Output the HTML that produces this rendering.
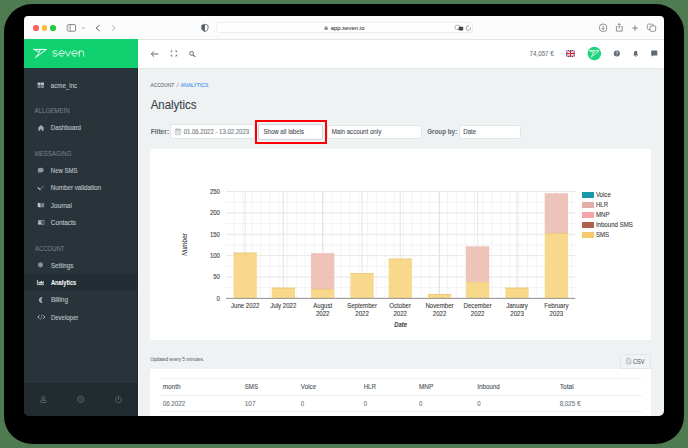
<!DOCTYPE html>
<html><head><meta charset="utf-8">
<style>
*{margin:0;padding:0;box-sizing:border-box}
html,body{width:688px;height:448px;overflow:hidden}
body{background:#4e7b51;position:relative;font-family:"Liberation Sans",sans-serif}
.a{position:absolute}
svg text{white-space:pre}
</style></head><body>
<div class="a" style="left:3.80px;top:3.90px;width:680.50px;height:440.30px;background:#000;border-radius:28px"></div>
<div class="a" style="left:24.00px;top:16.00px;width:640.00px;height:23.50px;background:#fcfcfc;border-radius:4px 4px 0 0"></div>
<div class="a" style="left:138.00px;top:39.10px;width:526.00px;height:0.70px;background:#e4e4e4"></div>
<div class="a" style="left:33.05px;top:25.05px;width:5.70px;height:5.70px;background:#fe5f57;border-radius:50%"></div>
<div class="a" style="left:41.65px;top:25.05px;width:5.70px;height:5.70px;background:#febc2e;border-radius:50%"></div>
<div class="a" style="left:50.35px;top:25.05px;width:5.70px;height:5.70px;background:#28c840;border-radius:50%"></div>
<div class="a" style="left:215.50px;top:22.40px;width:257.60px;height:11.00px;background:#fefefe;border:0.7px solid #ededed;border-radius:3.5px"></div>
<div class="a" style="left:24.00px;top:39.00px;width:114.00px;height:377.00px;background:#28343a;border-radius:0 0 0 5px"></div>
<div class="a" style="left:24.00px;top:39.00px;width:114.00px;height:28.90px;background:#10d070"></div>
<div class="a" style="left:24.00px;top:382.70px;width:114.00px;height:33.30px;background:#212b30;border-radius:0 0 0 5px"></div>
<div class="a" style="left:24.00px;top:273.70px;width:114.00px;height:17.20px;background:#232e34"></div>
<svg class="a" style="left:0;top:0" width="688" height="448"><path d="M57.2,51.7 Q56.5,50.75 55,50.75 Q52.8,50.75 52.8,52.2 Q52.8,53.4 55,53.5 Q57.4,53.6 57.4,54.85 Q57.4,56.25 55,56.25 Q53.2,56.25 52.4,55.3 M59,53.5 L64.4,53.5 A2.7,2.75 0 1 0 63.5,55.5 M65.3,50.75 L67.95,56.3 L70.6,50.75 M71.9,53.5 L77.3,53.5 A2.7,2.75 0 1 0 76.4,55.5 M79.2,50.45 L79.2,56.6 M79.2,53.3 Q79.2,50.75 81.45,50.75 Q83.7,50.75 83.7,53.3 L83.7,56.6" fill="none" stroke="#f4fff8" stroke-width="0.9"/></svg>
<div class="a" style="left:138.00px;top:39.80px;width:526.00px;height:376.20px;background:#eff2f3;border-radius:0 0 5px 0"></div>
<div class="a" style="left:138.00px;top:39.80px;width:526.00px;height:28.10px;background:#fff;box-shadow:0 0.6px 1.2px rgba(0,0,0,.06)"></div>
<div class="a" style="left:137.00px;top:67.90px;width:1.00px;height:348.00px;background:#1f292e"></div>
<div class="a" style="left:138.00px;top:67.50px;width:1.00px;height:348.50px;background:#f7f9f9"></div>
<div class="a" style="left:170.20px;top:124.10px;width:84.60px;height:15.30px;background:#fff;border:0.6px solid #e0e4e7;border-radius:2px"></div>
<div class="a" style="left:258.30px;top:124.00px;width:64.30px;height:16.00px;background:#fff;border:0.8px solid #c9d9e8;border-radius:2px"></div>
<div class="a" style="left:326.50px;top:124.80px;width:95.90px;height:14.50px;background:#fff;border:0.6px solid #e2e6e9;border-radius:2px"></div>
<div class="a" style="left:458.60px;top:125.00px;width:62.10px;height:14.20px;background:#fff;border:0.6px solid #e2e6e9;border-radius:2px"></div>
<div class="a" style="left:254.60px;top:120.00px;width:72.20px;height:23.80px;border:2.3px solid #f00"></div>
<div class="a" style="left:150.40px;top:149.30px;width:500.40px;height:191.00px;background:#fff"></div>
<div class="a" style="left:620.30px;top:353.50px;width:30.30px;height:15.20px;border:0.6px solid #e3e7e9;border-radius:2px;background:#f0f3f4"></div>
<div class="a" style="left:150.40px;top:368.70px;width:500.40px;height:47.30px;background:#fff"></div>
<div class="a" style="left:159.70px;top:377.60px;width:482.00px;height:0.80px;background:#eef0f2"></div>
<div class="a" style="left:159.70px;top:394.50px;width:482.00px;height:0.80px;background:#eef0f2"></div>
<div class="a" style="left:159.70px;top:411.40px;width:482.00px;height:0.80px;background:#eef0f2"></div>
<svg class="a" style="left:0;top:0" width="688" height="448" viewBox="0 0 688 448"><line x1="226" x2="575.3" y1="298.40" y2="298.40" stroke="#e0e0e0" stroke-width="0.8"/><line x1="226" x2="575.3" y1="287.72" y2="287.72" stroke="#eeeeee" stroke-width="0.8"/><line x1="226" x2="575.3" y1="277.04" y2="277.04" stroke="#e0e0e0" stroke-width="0.8"/><line x1="226" x2="575.3" y1="266.36" y2="266.36" stroke="#eeeeee" stroke-width="0.8"/><line x1="226" x2="575.3" y1="255.68" y2="255.68" stroke="#e0e0e0" stroke-width="0.8"/><line x1="226" x2="575.3" y1="245.00" y2="245.00" stroke="#eeeeee" stroke-width="0.8"/><line x1="226" x2="575.3" y1="234.32" y2="234.32" stroke="#e0e0e0" stroke-width="0.8"/><line x1="226" x2="575.3" y1="223.64" y2="223.64" stroke="#eeeeee" stroke-width="0.8"/><line x1="226" x2="575.3" y1="212.96" y2="212.96" stroke="#e0e0e0" stroke-width="0.8"/><line x1="226" x2="575.3" y1="202.28" y2="202.28" stroke="#eeeeee" stroke-width="0.8"/><line x1="226" x2="575.3" y1="191.60" y2="191.60" stroke="#e0e0e0" stroke-width="0.8"/><line x1="234.09" x2="234.09" y1="191.60" y2="298.4" stroke="#f0f0f0" stroke-width="0.8"/><line x1="242.98" x2="242.98" y1="191.60" y2="298.4" stroke="#f0f0f0" stroke-width="0.8"/><line x1="251.87" x2="251.87" y1="191.60" y2="298.4" stroke="#f0f0f0" stroke-width="0.8"/><line x1="260.76" x2="260.76" y1="191.60" y2="298.4" stroke="#f0f0f0" stroke-width="0.8"/><line x1="269.65" x2="269.65" y1="191.60" y2="298.4" stroke="#f0f0f0" stroke-width="0.8"/><line x1="278.54" x2="278.54" y1="191.60" y2="298.4" stroke="#f0f0f0" stroke-width="0.8"/><line x1="287.43" x2="287.43" y1="191.60" y2="298.4" stroke="#f0f0f0" stroke-width="0.8"/><line x1="296.33" x2="296.33" y1="191.60" y2="298.4" stroke="#f0f0f0" stroke-width="0.8"/><line x1="305.22" x2="305.22" y1="191.60" y2="298.4" stroke="#f0f0f0" stroke-width="0.8"/><line x1="314.11" x2="314.11" y1="191.60" y2="298.4" stroke="#f0f0f0" stroke-width="0.8"/><line x1="323.00" x2="323.00" y1="191.60" y2="298.4" stroke="#f0f0f0" stroke-width="0.8"/><line x1="331.89" x2="331.89" y1="191.60" y2="298.4" stroke="#f0f0f0" stroke-width="0.8"/><line x1="340.78" x2="340.78" y1="191.60" y2="298.4" stroke="#f0f0f0" stroke-width="0.8"/><line x1="349.67" x2="349.67" y1="191.60" y2="298.4" stroke="#f0f0f0" stroke-width="0.8"/><line x1="358.57" x2="358.57" y1="191.60" y2="298.4" stroke="#f0f0f0" stroke-width="0.8"/><line x1="367.46" x2="367.46" y1="191.60" y2="298.4" stroke="#f0f0f0" stroke-width="0.8"/><line x1="376.35" x2="376.35" y1="191.60" y2="298.4" stroke="#f0f0f0" stroke-width="0.8"/><line x1="385.24" x2="385.24" y1="191.60" y2="298.4" stroke="#f0f0f0" stroke-width="0.8"/><line x1="394.13" x2="394.13" y1="191.60" y2="298.4" stroke="#f0f0f0" stroke-width="0.8"/><line x1="403.02" x2="403.02" y1="191.60" y2="298.4" stroke="#f0f0f0" stroke-width="0.8"/><line x1="411.91" x2="411.91" y1="191.60" y2="298.4" stroke="#f0f0f0" stroke-width="0.8"/><line x1="420.81" x2="420.81" y1="191.60" y2="298.4" stroke="#f0f0f0" stroke-width="0.8"/><line x1="429.70" x2="429.70" y1="191.60" y2="298.4" stroke="#f0f0f0" stroke-width="0.8"/><line x1="438.59" x2="438.59" y1="191.60" y2="298.4" stroke="#f0f0f0" stroke-width="0.8"/><line x1="447.48" x2="447.48" y1="191.60" y2="298.4" stroke="#f0f0f0" stroke-width="0.8"/><line x1="456.37" x2="456.37" y1="191.60" y2="298.4" stroke="#f0f0f0" stroke-width="0.8"/><line x1="465.26" x2="465.26" y1="191.60" y2="298.4" stroke="#f0f0f0" stroke-width="0.8"/><line x1="474.15" x2="474.15" y1="191.60" y2="298.4" stroke="#f0f0f0" stroke-width="0.8"/><line x1="483.04" x2="483.04" y1="191.60" y2="298.4" stroke="#f0f0f0" stroke-width="0.8"/><line x1="491.94" x2="491.94" y1="191.60" y2="298.4" stroke="#f0f0f0" stroke-width="0.8"/><line x1="500.83" x2="500.83" y1="191.60" y2="298.4" stroke="#f0f0f0" stroke-width="0.8"/><line x1="509.72" x2="509.72" y1="191.60" y2="298.4" stroke="#f0f0f0" stroke-width="0.8"/><line x1="518.61" x2="518.61" y1="191.60" y2="298.4" stroke="#f0f0f0" stroke-width="0.8"/><line x1="527.50" x2="527.50" y1="191.60" y2="298.4" stroke="#f0f0f0" stroke-width="0.8"/><line x1="536.39" x2="536.39" y1="191.60" y2="298.4" stroke="#f0f0f0" stroke-width="0.8"/><line x1="545.28" x2="545.28" y1="191.60" y2="298.4" stroke="#f0f0f0" stroke-width="0.8"/><line x1="554.18" x2="554.18" y1="191.60" y2="298.4" stroke="#f0f0f0" stroke-width="0.8"/><line x1="563.07" x2="563.07" y1="191.60" y2="298.4" stroke="#f0f0f0" stroke-width="0.8"/><line x1="571.96" x2="571.96" y1="191.60" y2="298.4" stroke="#f0f0f0" stroke-width="0.8"/><line x1="245.20" x2="245.20" y1="191.60" y2="298.4" stroke="#dedede" stroke-width="0.8"/><line x1="283.31" x2="283.31" y1="191.60" y2="298.4" stroke="#dedede" stroke-width="0.8"/><line x1="322.68" x2="322.68" y1="191.60" y2="298.4" stroke="#dedede" stroke-width="0.8"/><line x1="362.06" x2="362.06" y1="191.60" y2="298.4" stroke="#dedede" stroke-width="0.8"/><line x1="400.16" x2="400.16" y1="191.60" y2="298.4" stroke="#dedede" stroke-width="0.8"/><line x1="439.54" x2="439.54" y1="191.60" y2="298.4" stroke="#dedede" stroke-width="0.8"/><line x1="477.65" x2="477.65" y1="191.60" y2="298.4" stroke="#dedede" stroke-width="0.8"/><line x1="517.02" x2="517.02" y1="191.60" y2="298.4" stroke="#dedede" stroke-width="0.8"/><line x1="556.40" x2="556.40" y1="191.60" y2="298.4" stroke="#dedede" stroke-width="0.8"/><rect x="233.55" y="252.69" width="23.3" height="45.71" fill="rgb(247,214,130)" fill-opacity="0.92"/><line x1="233.55" x2="256.85" y1="252.99" y2="252.99" stroke="rgba(200,160,60,0.5)" stroke-width="0.6"/><rect x="271.66" y="287.72" width="23.3" height="10.68" fill="rgb(247,214,130)" fill-opacity="0.92"/><line x1="271.66" x2="294.96" y1="288.02" y2="288.02" stroke="rgba(200,160,60,0.5)" stroke-width="0.6"/><rect x="311.03" y="289.00" width="23.3" height="9.40" fill="rgb(247,214,130)" fill-opacity="0.92"/><line x1="311.03" x2="334.33" y1="289.30" y2="289.30" stroke="rgba(200,160,60,0.5)" stroke-width="0.6"/><rect x="311.03" y="253.12" width="23.3" height="35.88" fill="rgb(235,190,180)" fill-opacity="0.92"/><rect x="350.41" y="273.20" width="23.3" height="25.20" fill="rgb(247,214,130)" fill-opacity="0.92"/><line x1="350.41" x2="373.71" y1="273.50" y2="273.50" stroke="rgba(200,160,60,0.5)" stroke-width="0.6"/><rect x="388.51" y="258.67" width="23.3" height="39.73" fill="rgb(247,214,130)" fill-opacity="0.92"/><line x1="388.51" x2="411.81" y1="258.97" y2="258.97" stroke="rgba(200,160,60,0.5)" stroke-width="0.6"/><rect x="427.89" y="294.13" width="23.3" height="4.27" fill="rgb(247,214,130)" fill-opacity="0.92"/><line x1="427.89" x2="451.19" y1="294.43" y2="294.43" stroke="rgba(200,160,60,0.5)" stroke-width="0.6"/><rect x="466.00" y="281.74" width="23.3" height="16.66" fill="rgb(247,214,130)" fill-opacity="0.92"/><line x1="466.00" x2="489.30" y1="282.04" y2="282.04" stroke="rgba(200,160,60,0.5)" stroke-width="0.6"/><rect x="466.00" y="246.28" width="23.3" height="35.46" fill="rgb(235,190,180)" fill-opacity="0.92"/><rect x="505.37" y="287.72" width="23.3" height="10.68" fill="rgb(247,214,130)" fill-opacity="0.92"/><line x1="505.37" x2="528.67" y1="288.02" y2="288.02" stroke="rgba(200,160,60,0.5)" stroke-width="0.6"/><rect x="544.75" y="233.04" width="23.3" height="65.36" fill="rgb(247,214,130)" fill-opacity="0.92"/><line x1="544.75" x2="568.05" y1="233.34" y2="233.34" stroke="rgba(200,160,60,0.5)" stroke-width="0.6"/><rect x="544.75" y="193.31" width="23.3" height="39.73" fill="rgb(235,190,180)" fill-opacity="0.92"/><line x1="226" x2="575.3" y1="298.4" y2="298.4" stroke="#8a8a8a" stroke-width="0.9"/></svg>
<div class="a" style="left:581.70px;top:191.50px;width:12.20px;height:6.00px;background:#1a9aa8"></div>
<div class="a" style="left:581.70px;top:201.50px;width:12.20px;height:6.00px;background:#e2afa7"></div>
<div class="a" style="left:581.70px;top:211.50px;width:12.20px;height:6.00px;background:#f6a4ac"></div>
<div class="a" style="left:581.70px;top:221.50px;width:12.20px;height:6.00px;background:#b1604f"></div>
<div class="a" style="left:581.70px;top:231.50px;width:12.20px;height:6.00px;background:#f5ca6c"></div>
<svg class="a" style="left:0;top:0" width="688" height="448" viewBox="0 0 688 448"><rect x="67.2" y="24.6" width="8.4" height="6.6" rx="1.3" fill="none" stroke="#777" stroke-width="0.9"/><line x1="70.4" x2="70.4" y1="24.6" y2="31.2" stroke="#777" stroke-width="0.8"/><rect x="67.6" y="25" width="2.8" height="5.8" fill="#ddd"/><line x1="79.7" x2="79.7" y1="24" y2="32" stroke="#eee" stroke-width="0.5"/><polyline points="82.3,27.3 83.6,28.7 84.9,27.3" fill="none" stroke="#888" stroke-width="0.7"/><polyline points="99.6,25.2 96.1,28.1 99.6,31" fill="none" stroke="#555" stroke-width="0.95"/><polyline points="111.9,25.2 115.2,28.1 111.9,31" fill="none" stroke="#b5b5b5" stroke-width="0.95"/><path d="M204.9,24.2 L208,25.3 L208,28.6 Q208,30.6 204.9,31.6 Q201.8,30.6 201.8,28.6 L201.8,25.3 Z" fill="none" stroke="#555d63" stroke-width="0.8"/><path d="M204.9,24.2 L201.8,25.3 L201.8,28.6 Q201.8,30.6 204.9,31.6 Z" fill="#555d63"/><rect x="324.5" y="27.6" width="3.2" height="2.1" fill="#777"/><path d="M325.1,27.7 L325.1,26.9 Q326.1,25.6 327.1,26.9 L327.1,27.7" fill="none" stroke="#777" stroke-width="0.6"/><rect x="455.3" y="25.3" width="4.6" height="4.2" rx="1" fill="none" stroke="#999" stroke-width="0.7"/><rect x="458.6" y="26.8" width="4.6" height="3.8" rx="1" fill="#444"/><path d="M470.3,27.3 A2.2,2.2 0 1 1 468.3,26" fill="none" stroke="#888" stroke-width="0.7"/><polyline points="467.9,25.1 468.8,26 467.9,26.9" fill="none" stroke="#888" stroke-width="0.6"/><circle cx="603.1" cy="27.75" r="3.8" fill="none" stroke="#777" stroke-width="0.8"/><line x1="603.1" x2="603.1" y1="25.8" y2="29.4" stroke="#777" stroke-width="0.8"/><polyline points="601.7,28.1 603.1,29.5 604.5,28.1" fill="none" stroke="#777" stroke-width="0.8"/><path d="M617.8,26.6 L616.4,26.6 L616.4,31.1 L622.2,31.1 L622.2,26.6 L620.8,26.6" fill="none" stroke="#777" stroke-width="0.8"/><line x1="619.3" x2="619.3" y1="23.6" y2="28.6" stroke="#777" stroke-width="0.8"/><polyline points="617.9,25 619.3,23.6 620.7,25" fill="none" stroke="#777" stroke-width="0.8"/><line x1="632.2" x2="637.9" y1="28.1" y2="28.1" stroke="#777" stroke-width="0.9"/><line x1="635.05" x2="635.05" y1="25.3" y2="31" stroke="#777" stroke-width="0.9"/><rect x="647.4" y="24.1" width="5.8" height="5.4" rx="1.3" fill="#fff" stroke="#888" stroke-width="0.8"/><rect x="649.9" y="25.9" width="5.8" height="5.4" rx="1.3" fill="#fff" stroke="#777" stroke-width="0.8"/><line x1="151.3" x2="158.3" y1="54" y2="54" stroke="#5f6a75" stroke-width="1"/><polyline points="154,51.3 151.3,54 154,56.7" fill="none" stroke="#5f6a75" stroke-width="1"/><polyline points="171.2,52.199999999999996 171.2,50.9 172.5,50.9" fill="none" stroke="#5f6a75" stroke-width="0.9"/><polyline points="176.6,52.199999999999996 176.6,50.9 175.29999999999998,50.9" fill="none" stroke="#5f6a75" stroke-width="0.9"/><polyline points="171.2,54.7 171.2,56 172.5,56" fill="none" stroke="#5f6a75" stroke-width="0.9"/><polyline points="176.6,54.7 176.6,56 175.29999999999998,56" fill="none" stroke="#5f6a75" stroke-width="0.9"/><circle cx="191.6" cy="53.4" r="1.9" fill="none" stroke="#5f6a75" stroke-width="1"/><line x1="193" x2="195.3" y1="54.8" y2="56.9" stroke="#5f6a75" stroke-width="1.1"/><rect x="566" y="50.1" width="8.9" height="6.9" fill="#2a3a8a"/><path d="M566,50.1 L574.9,57 M574.9,50.1 L566,57" stroke="#fff" stroke-width="1.4"/><path d="M566,50.1 L574.9,57 M574.9,50.1 L566,57" stroke="#d33" stroke-width="0.5"/><path d="M570.45,50.1 V57 M566,53.55 H574.9" stroke="#fff" stroke-width="2"/><path d="M570.45,50.1 V57 M566,53.55 H574.9" stroke="#e22" stroke-width="1.1"/><circle cx="594.35" cy="53.45" r="6.75" fill="#1ed47c"/><path d="M589.8,50.7 L599.0,50.7 L591.0,57.3 M589.8,50.7 L593.0,52.4 M594.4,50.9 L593.0,53.8 L591.6,56.2" fill="none" stroke="#effcf5" stroke-width="0.85" stroke-linejoin="round" stroke-linecap="round"/><circle cx="616.85" cy="53.55" r="3.05" fill="#5f6a75"/><path d="M615.9,52.8 Q616,51.8 616.9,51.8 Q617.9,51.9 617.8,52.8 Q617.7,53.4 616.9,53.8 L616.9,54.4" fill="none" stroke="#fff" stroke-width="0.6"/><circle cx="616.9" cy="55.3" r="0.35" fill="#fff"/><path d="M633,55.6 L633.9,54.7 L633.9,53 Q634,50.9 635.65,50.8 Q637.3,50.9 637.4,53 L637.4,54.7 L638.3,55.6 Z" fill="#5f6a75"/><circle cx="635.65" cy="56.1" r="0.7" fill="#5f6a75"/><path d="M651.6,50.6 L656.9,50.6 Q657.3,50.6 657.3,51 L657.3,55.2 Q657.3,55.6 656.9,55.6 L653.2,55.6 L652.1,56.7 L652.1,55.6 L651.6,55.6 Q651.2,55.6 651.2,55.2 L651.2,51 Q651.2,50.6 651.6,50.6 Z" fill="#5f6a75"/><path d="M34,49.4 L46.4,49.4 L35.6,57.5 M34,49.4 L38.3,51.7 M40.3,49.7 L38.4,53.6 L36.4,56.6" fill="none" stroke="#fff" stroke-width="1.0" stroke-linejoin="round" stroke-linecap="round"/><rect x="37.6" y="82.5" width="3" height="2.6" fill="#b9c1c5"/><rect x="41" y="82.5" width="3" height="2.6" fill="#b9c1c5"/><rect x="37.6" y="85.4" width="3" height="2.6" fill="#7d888e"/><rect x="41" y="85.4" width="3" height="2.6" fill="#7d888e"/><path d="M37.6,128.3 L41,125.1 L44.4,128.3 L43.5,128.3 L43.5,130.7 L41.8,130.7 L41.8,129.2 L40.2,129.2 L40.2,130.7 L38.5,130.7 L38.5,128.3 Z" fill="#a4adb2"/><ellipse cx="40.7" cy="170.1" rx="2.9" ry="2.3" fill="#8f999e"/><path d="M38.4,171.2 L37.7,172.9 L40.2,172.1 Z" fill="#8f999e"/><path d="M38.1,187.6 L40,189.5" fill="none" stroke="#b3bbbf" stroke-width="1.2" stroke-linecap="round"/><path d="M40,189.5 L43.4,186" fill="none" stroke="#7f898f" stroke-width="1" stroke-linecap="round"/><path d="M37.7,202.8 L40.6,203.3 L40.6,207.6 L37.7,207.1 Z" fill="#bcc4c8"/><path d="M41.3,203.3 L44.1,202.8 L44.1,207.1 L41.3,207.6 Z" fill="#7d878d"/><rect x="37.9" y="220.2" width="6.5" height="4.5" fill="#8d979c"/><rect x="41.7" y="221" width="2" height="2.9" fill="#364148"/><circle cx="39.6" cy="221.6" r="0.8" fill="#c5cbce"/><rect x="38.5" y="222.9" width="2.4" height="1.2" fill="#c5cbce"/><path d="M40.5,261.9 L43,263.4 L43,266.3 L40.5,267.8 L38,266.3 L38,263.4 Z" fill="#7f8a90"/><circle cx="40.5" cy="264.85" r="0.9" fill="#9aa3a8"/><path d="M37.4,279.9 L37.4,284.6 L44,284.6" fill="none" stroke="#e6eaec" stroke-width="0.8"/><path d="M38.6,283.6 L38.6,281.2 L40,282.6 L41.3,280.8 L42.7,282.4 L43.6,280.3 L43.6,283.6 Z" fill="#e6eaec"/><path d="M42.8,297.0 A3.1,3.0 0 1 0 42.8,302.8 A2.2,3.1 0 0 1 42.8,297.0 Z" fill="#a9b2b7"/><polyline points="39.5,315.4 37.9,317.1 39.5,318.8" fill="none" stroke="#b4bcc0" stroke-width="1"/><polyline points="43.2,315.4 44.8,317.1 43.2,318.8" fill="none" stroke="#b4bcc0" stroke-width="1"/><line x1="42.1" x2="40.6" y1="314.4" y2="319.8" stroke="#7f898f" stroke-width="0.8"/><circle cx="43.2" cy="397.8" r="1.6" fill="none" stroke="#5f6a70" stroke-width="0.85"/><rect x="40.4" y="400.3" width="5.9" height="2.3" rx="1.15" fill="none" stroke="#5f6a70" stroke-width="0.85"/><path d="M80.8,396.1 L83.75,397.75 L83.75,401.05 L80.8,402.7 L77.85,401.05 L77.85,397.75 Z" fill="none" stroke="#5f6a70" stroke-width="0.9" stroke-linejoin="round"/><circle cx="80.8" cy="399.4" r="1.0" fill="none" stroke="#5f6a70" stroke-width="0.7"/><path d="M116.9,397.2 A3.0,3.0 0 1 0 120.1,397.2" fill="none" stroke="#5f6a70" stroke-width="0.9" stroke-linecap="round"/><line x1="118.5" x2="118.5" y1="396.2" y2="399.5" stroke="#5f6a70" stroke-width="0.9" stroke-linecap="round"/><rect x="175.2" y="129" width="5.6" height="6" rx="0.8" fill="#dfe3e6" stroke="#c3c9cd" stroke-width="0.6"/><rect x="175.2" y="129" width="5.6" height="1.6" fill="#b8bfc4"/><rect x="176.5" y="128.4" width="0.7" height="1.2" fill="#a9b0b5"/><rect x="178.8" y="128.4" width="0.7" height="1.2" fill="#a9b0b5"/><path d="M626.7,358.2 L629.4,358.2 L630.9,359.7 L630.9,363.8 L626.7,363.8 Z" fill="#dde2e5" stroke="#a3abb1" stroke-width="0.7"/></svg>
<svg class="a" style="left:0;top:0" width="688" height="448" viewBox="0 0 688 448" font-family="Liberation Sans, sans-serif"><text x="330.75" y="29.60" font-size="5.60" fill="#4a4a4a" textLength="33.70" lengthAdjust="spacingAndGlyphs"  stroke="#4a4a4a" stroke-width="0.1">app.seven.io</text><text x="50.75" y="88.10" font-size="6.70" fill="#bbc1c5" textLength="26.40" lengthAdjust="spacingAndGlyphs"  stroke="#bbc1c5" stroke-width="0.12">acme_inc</text><text x="34.55" y="113.10" font-size="6.70" fill="#7a848a" textLength="35.10" lengthAdjust="spacingAndGlyphs" >ALLGEMEIN</text><text x="50.75" y="130.40" font-size="6.70" fill="#bbc1c5" textLength="30.20" lengthAdjust="spacingAndGlyphs"  stroke="#bbc1c5" stroke-width="0.12">Dashboard</text><text x="34.75" y="156.10" font-size="6.70" fill="#7a848a" textLength="36.70" lengthAdjust="spacingAndGlyphs" >MESSAGING</text><text x="50.85" y="172.90" font-size="6.70" fill="#bbc1c5" textLength="26.70" lengthAdjust="spacingAndGlyphs"  stroke="#bbc1c5" stroke-width="0.12">New SMS</text><text x="50.85" y="190.20" font-size="6.70" fill="#bbc1c5" textLength="50.20" lengthAdjust="spacingAndGlyphs"  stroke="#bbc1c5" stroke-width="0.12">Number validation</text><text x="50.85" y="207.60" font-size="6.70" fill="#bbc1c5" textLength="21.00" lengthAdjust="spacingAndGlyphs"  stroke="#bbc1c5" stroke-width="0.12">Journal</text><text x="50.85" y="224.90" font-size="6.70" fill="#bbc1c5" textLength="25.10" lengthAdjust="spacingAndGlyphs"  stroke="#bbc1c5" stroke-width="0.12">Contacts</text><text x="34.95" y="250.60" font-size="6.70" fill="#7a848a" textLength="29.50" lengthAdjust="spacingAndGlyphs" >ACCOUNT</text><text x="50.95" y="267.70" font-size="6.70" fill="#bbc1c5" textLength="22.40" lengthAdjust="spacingAndGlyphs"  stroke="#bbc1c5" stroke-width="0.12">Settings</text><text x="50.95" y="285.00" font-size="6.70" fill="#ffffff" font-weight="bold" textLength="25.30" lengthAdjust="spacingAndGlyphs" >Analytics</text><text x="50.95" y="302.40" font-size="6.70" fill="#bbc1c5" textLength="17.00" lengthAdjust="spacingAndGlyphs"  stroke="#bbc1c5" stroke-width="0.12">Billing</text><text x="50.95" y="319.70" font-size="6.70" fill="#bbc1c5" textLength="27.30" lengthAdjust="spacingAndGlyphs"  stroke="#bbc1c5" stroke-width="0.12">Developer</text><text x="529.55" y="56.10" font-size="6.60" fill="#6c757d" textLength="24.20" lengthAdjust="spacingAndGlyphs"  stroke="#6c757d" stroke-width="0.1">74,057 €</text><text x="150.55" y="86.80" font-size="6.00" fill="#646d74" textLength="23.50" lengthAdjust="spacingAndGlyphs" stroke="#646d74" stroke-width="0.1">ACCOUNT</text><text x="176.15" y="86.80" font-size="6.00" fill="#b8bec3" textLength="2.80" lengthAdjust="spacingAndGlyphs"  stroke="#b8bec3" stroke-width="0.1">/</text><text x="180.75" y="86.80" font-size="6.00" fill="#3a8ef0" textLength="27.50" lengthAdjust="spacingAndGlyphs" stroke="#3a8ef0" stroke-width="0.1">ANALYTICS</text><text x="150.65" y="108.50" font-size="12.06" fill="#3a4249" textLength="45.90" lengthAdjust="spacingAndGlyphs"  stroke="#3a4249" stroke-width="0.1">Analytics</text><text x="150.65" y="134.10" font-size="7.00" fill="#5f6870" font-weight="bold" textLength="18.50" lengthAdjust="spacingAndGlyphs" >Filter:</text><text x="183.65" y="134.10" font-size="6.70" fill="#737c83" textLength="65.50" lengthAdjust="spacingAndGlyphs"  stroke="#737c83" stroke-width="0.1">01.06.2022 - 13.02.2023</text><text x="263.45" y="134.10" font-size="6.70" fill="#495057" textLength="40.60" lengthAdjust="spacingAndGlyphs"  stroke="#495057" stroke-width="0.1">Show all labels</text><text x="331.65" y="134.10" font-size="6.70" fill="#495057" textLength="49.60" lengthAdjust="spacingAndGlyphs"  stroke="#495057" stroke-width="0.1">Main account only</text><text x="427.25" y="134.10" font-size="7.00" fill="#5f6870" font-weight="bold" textLength="29.80" lengthAdjust="spacingAndGlyphs" >Group by:</text><text x="463.25" y="134.10" font-size="6.70" fill="#495057" textLength="13.00" lengthAdjust="spacingAndGlyphs"  stroke="#495057" stroke-width="0.1">Date</text><text x="150.25" y="360.90" font-size="5.30" fill="#6c757d" textLength="53.90" lengthAdjust="spacingAndGlyphs"  stroke="#6c757d" stroke-width="0.1">Updated every 5 minutes.</text><text x="632.95" y="363.60" font-size="6.30" fill="#5d6770" textLength="11.50" lengthAdjust="spacingAndGlyphs"  stroke="#5d6770" stroke-width="0.1">CSV</text><text x="162.75" y="388.90" font-size="6.80" fill="#4a5259" textLength="17.70" lengthAdjust="spacingAndGlyphs"  stroke="#4a5259" stroke-width="0.1">month</text><text x="162.75" y="405.90" font-size="6.80" fill="#6c757d" textLength="22.40" lengthAdjust="spacingAndGlyphs"  stroke="#6c757d" stroke-width="0.1">06.2022</text><text x="244.75" y="388.90" font-size="6.80" fill="#4a5259" textLength="13.40" lengthAdjust="spacingAndGlyphs"  stroke="#4a5259" stroke-width="0.1">SMS</text><text x="244.75" y="405.90" font-size="6.80" fill="#6c757d" textLength="10.70" lengthAdjust="spacingAndGlyphs"  stroke="#6c757d" stroke-width="0.1">107</text><text x="300.85" y="388.90" font-size="6.80" fill="#4a5259" textLength="15.40" lengthAdjust="spacingAndGlyphs"  stroke="#4a5259" stroke-width="0.1">Voice</text><text x="300.85" y="405.90" font-size="6.80" fill="#6c757d" textLength="3.30" lengthAdjust="spacingAndGlyphs"  stroke="#6c757d" stroke-width="0.1">0</text><text x="363.65" y="388.90" font-size="6.80" fill="#4a5259" textLength="12.30" lengthAdjust="spacingAndGlyphs"  stroke="#4a5259" stroke-width="0.1">HLR</text><text x="363.65" y="405.90" font-size="6.80" fill="#6c757d" textLength="3.30" lengthAdjust="spacingAndGlyphs"  stroke="#6c757d" stroke-width="0.1">0</text><text x="418.95" y="388.90" font-size="6.80" fill="#4a5259" textLength="14.30" lengthAdjust="spacingAndGlyphs"  stroke="#4a5259" stroke-width="0.1">MNP</text><text x="418.95" y="405.90" font-size="6.80" fill="#6c757d" textLength="3.30" lengthAdjust="spacingAndGlyphs"  stroke="#6c757d" stroke-width="0.1">0</text><text x="477.25" y="388.90" font-size="6.80" fill="#4a5259" textLength="22.50" lengthAdjust="spacingAndGlyphs"  stroke="#4a5259" stroke-width="0.1">Inbound</text><text x="477.25" y="405.90" font-size="6.80" fill="#6c757d" textLength="3.30" lengthAdjust="spacingAndGlyphs"  stroke="#6c757d" stroke-width="0.1">0</text><text x="559.65" y="388.90" font-size="6.80" fill="#4a5259" textLength="14.10" lengthAdjust="spacingAndGlyphs"  stroke="#4a5259" stroke-width="0.1">Total</text><text x="559.65" y="405.90" font-size="6.80" fill="#6c757d" textLength="20.70" lengthAdjust="spacingAndGlyphs"  stroke="#6c757d" stroke-width="0.1">8,025 €</text><text x="216.56" y="300.70" font-size="6.80" fill="#404040" textLength="3.34" lengthAdjust="spacingAndGlyphs"  stroke="#404040" stroke-width="0.1">0</text><text x="213.23" y="279.34" font-size="6.80" fill="#404040" textLength="6.67" lengthAdjust="spacingAndGlyphs"  stroke="#404040" stroke-width="0.1">50</text><text x="209.89" y="257.98" font-size="6.80" fill="#404040" textLength="10.01" lengthAdjust="spacingAndGlyphs"  stroke="#404040" stroke-width="0.1">100</text><text x="209.89" y="236.62" font-size="6.80" fill="#404040" textLength="10.01" lengthAdjust="spacingAndGlyphs"  stroke="#404040" stroke-width="0.1">150</text><text x="209.89" y="215.26" font-size="6.80" fill="#404040" textLength="10.01" lengthAdjust="spacingAndGlyphs"  stroke="#404040" stroke-width="0.1">200</text><text x="209.89" y="193.90" font-size="6.80" fill="#404040" textLength="10.01" lengthAdjust="spacingAndGlyphs"  stroke="#404040" stroke-width="0.1">250</text><text x="230.95" y="308.10" font-size="6.80" fill="#404040" textLength="28.49" lengthAdjust="spacingAndGlyphs"  stroke="#404040" stroke-width="0.1">June 2022</text><text x="270.25" y="308.10" font-size="6.80" fill="#404040" textLength="26.11" lengthAdjust="spacingAndGlyphs"  stroke="#404040" stroke-width="0.1">July 2022</text><text x="313.19" y="308.10" font-size="6.80" fill="#404040" textLength="18.99" lengthAdjust="spacingAndGlyphs"  stroke="#404040" stroke-width="0.1">August</text><text x="315.90" y="315.80" font-size="6.80" fill="#404040" textLength="13.57" lengthAdjust="spacingAndGlyphs"  stroke="#404040" stroke-width="0.1">2022</text><text x="347.14" y="308.10" font-size="6.80" fill="#404040" textLength="29.84" lengthAdjust="spacingAndGlyphs"  stroke="#404040" stroke-width="0.1">September</text><text x="355.27" y="315.80" font-size="6.80" fill="#404040" textLength="13.57" lengthAdjust="spacingAndGlyphs"  stroke="#404040" stroke-width="0.1">2022</text><text x="389.31" y="308.10" font-size="6.80" fill="#404040" textLength="21.70" lengthAdjust="spacingAndGlyphs"  stroke="#404040" stroke-width="0.1">October</text><text x="393.38" y="315.80" font-size="6.80" fill="#404040" textLength="13.57" lengthAdjust="spacingAndGlyphs"  stroke="#404040" stroke-width="0.1">2022</text><text x="425.47" y="308.10" font-size="6.80" fill="#404040" textLength="28.14" lengthAdjust="spacingAndGlyphs"  stroke="#404040" stroke-width="0.1">November</text><text x="432.76" y="315.80" font-size="6.80" fill="#404040" textLength="13.57" lengthAdjust="spacingAndGlyphs"  stroke="#404040" stroke-width="0.1">2022</text><text x="463.58" y="308.10" font-size="6.80" fill="#404040" textLength="28.14" lengthAdjust="spacingAndGlyphs"  stroke="#404040" stroke-width="0.1">December</text><text x="470.86" y="315.80" font-size="6.80" fill="#404040" textLength="13.57" lengthAdjust="spacingAndGlyphs"  stroke="#404040" stroke-width="0.1">2022</text><text x="506.17" y="308.10" font-size="6.80" fill="#404040" textLength="21.70" lengthAdjust="spacingAndGlyphs"  stroke="#404040" stroke-width="0.1">January</text><text x="510.24" y="315.80" font-size="6.80" fill="#404040" textLength="13.57" lengthAdjust="spacingAndGlyphs"  stroke="#404040" stroke-width="0.1">2023</text><text x="544.19" y="308.10" font-size="6.80" fill="#404040" textLength="24.41" lengthAdjust="spacingAndGlyphs"  stroke="#404040" stroke-width="0.1">February</text><text x="549.61" y="315.80" font-size="6.80" fill="#404040" textLength="13.57" lengthAdjust="spacingAndGlyphs"  stroke="#404040" stroke-width="0.1">2023</text><text x="394.15" y="327.00" font-size="6.80" fill="#404040" font-weight="bold" font-style="italic" textLength="12.90" lengthAdjust="spacingAndGlyphs" >Date</text><text x="173.20" y="246.90" font-size="6.80" fill="#404040" font-style="italic" textLength="22.40" lengthAdjust="spacingAndGlyphs" transform="rotate(-90 184.4 244.6)" stroke="#404040" stroke-width="0.1">Number</text><text x="595.90" y="196.90" font-size="6.80" fill="#404040" textLength="14.92" lengthAdjust="spacingAndGlyphs"  stroke="#404040" stroke-width="0.1">Voice</text><text x="595.90" y="206.90" font-size="6.80" fill="#404040" textLength="12.20" lengthAdjust="spacingAndGlyphs"  stroke="#404040" stroke-width="0.1">HLR</text><text x="595.90" y="216.90" font-size="6.80" fill="#404040" textLength="13.56" lengthAdjust="spacingAndGlyphs"  stroke="#404040" stroke-width="0.1">MNP</text><text x="595.90" y="226.90" font-size="6.80" fill="#404040" textLength="36.96" lengthAdjust="spacingAndGlyphs"  stroke="#404040" stroke-width="0.1">Inbound SMS</text><text x="595.90" y="236.90" font-size="6.80" fill="#404040" textLength="13.22" lengthAdjust="spacingAndGlyphs"  stroke="#404040" stroke-width="0.1">SMS</text></svg>
</body></html>
